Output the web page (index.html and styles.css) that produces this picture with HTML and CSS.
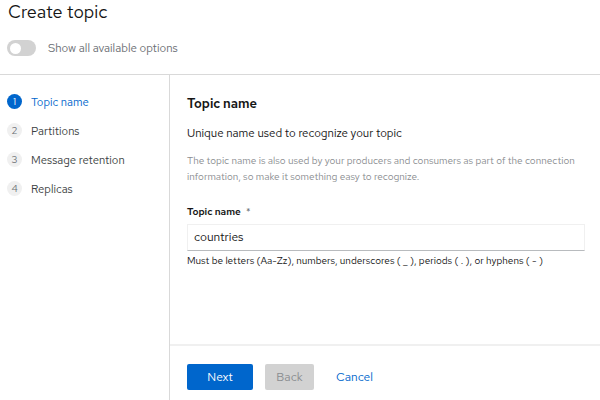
FILE: index.html
```html
<!DOCTYPE html>
<html>
<head>
<meta charset="utf-8">
<link rel="stylesheet" href="styles.css">
</head>
<body>
<div class="page">
  <header class="header">
    <h1 class="title">Create topic</h1>
    <div class="switch-row">
      <span class="switch"><span class="knob"></span></span>
      <span class="switch-label">Show all available options</span>
    </div>
  </header>
  <div class="wizard">
    <nav class="nav">
      <div class="step active"><span class="num">1</span><span class="step-text">Topic name</span></div>
      <div class="step"><span class="num">2</span><span class="step-text">Partitions</span></div>
      <div class="step"><span class="num">3</span><span class="step-text">Message retention</span></div>
      <div class="step"><span class="num">4</span><span class="step-text">Replicas</span></div>
    </nav>
    <div class="panel">
      <div class="body">
        <h2 class="h2">Topic name</h2>
        <p class="lead">Unique name used to recognize your topic</p>
        <p class="desc">The topic name is also used by your producers and consumers as part of the connection information, so make it something easy to recognize.</p>
        <div class="label">Topic name <span class="req">*</span></div>
        <div class="input">countries</div>
        <div class="helper">Must be letters (Aa-Zz), numbers, underscores ( _ ), periods ( . ), or hyphens ( - )</div>
      </div>
      <div class="footer">
        <span class="btn primary">Next</span>
        <span class="btn disabled">Back</span>
        <span class="btn link">Cancel</span>
      </div>
    </div>
  </div>
</div>
</body>
</html>
```
FILE: styles.css
```css
* { box-sizing: border-box; }
html, body { margin: 0; padding: 0; background: #fff; }
body {
  font-family: "Red Hat Text", "Open Sans", "Liberation Sans", sans-serif;
  color: #151515;
  width: 600px;
  height: 400px;
  overflow: hidden;
}
.page { display: flex; flex-direction: column; height: 400px; }
.header {
  height: 75px;
  border-bottom: 1px solid #d9d9d9;
  padding: 0 0 0 8px;
}
.title {
  margin: 0;
  padding-top: 0;
  font-size: 18px;
  line-height: 24px;
  font-weight: 400;
  color: #151515;
}
.switch-row {
  display: flex;
  align-items: center;
  margin-top: 16px;
  margin-left: -1px;
}
.switch {
  width: 29px;
  height: 16px;
  border-radius: 8px;
  background: #d2d2d2;
  display: flex;
  align-items: center;
  padding-left: 3px;
}
.knob {
  width: 11px;
  height: 11px;
  border-radius: 50%;
  background: #fff;
}
.switch-label {
  margin-left: 12px;
  font-size: 11.5px;
  color: #6a6e73;
}
.wizard { flex: 1; display: flex; }
.nav {
  width: 170px;
  border-right: 1px solid #d9d9d9;
  padding-top: 12px;
  padding-left: 7px;
}
.step {
  display: flex;
  align-items: center;
  height: 29px;
  font-size: 11.3px;
  color: #3c3f42;
}
.num {
  width: 15px;
  height: 15px;
  border-radius: 50%;
  background: #f0f0f0;
  color: #6a6e73;
  font-size: 10px;
  display: flex;
  align-items: center;
  justify-content: center;
  margin-right: 9px;
}
.step.active .num { background: #0066cc; color: #fff; }
.step.active .step-text { color: #0066cc; }
.panel { flex: 1; display: flex; flex-direction: column; }
.body { flex: 1; padding: 20px 15px 0 17px; }
.h2 {
  margin: 0;
  font-size: 13px;
  line-height: 18px;
  font-weight: 600;
  color: #151515;
}
.lead {
  margin: 11px 0 0;
  font-size: 11.5px;
  line-height: 18px;
  color: #151515;
}
.desc {
  margin: 11px 0 0;
  font-size: 10px;
  line-height: 16px;
  color: #8a8d90;
}
.label {
  margin-top: 20px;
  font-size: 10px;
  line-height: 14px;
  font-weight: 600;
}
.req { color: #6a6e73; margin-left: 3px; font-weight: 400; }
.input {
  margin-top: 5px;
  height: 27px;
  border: 1px solid #f0f0f0;
  border-bottom: 1px solid #b8bbbe;
  padding: 0 6px;
  font-size: 12px;
  line-height: 25px;
  color: #151515;
}
.helper {
  margin-top: 3px;
  font-size: 10px;
  line-height: 14px;
  color: #151515;
}
.footer {
  height: 56px;
  border-top: 2px solid #f0f0f0;
  display: flex;
  align-items: flex-start;
  padding: 18px 0 0 17px;
  gap: 12px;
}
.btn {
  height: 26px;
  border-radius: 2px;
  font-size: 12px;
  line-height: 26px;
  text-align: center;
}
.primary { width: 66px; background: #0066cc; color: #fff; }
.disabled { width: 49px; background: #d2d2d2; color: #8a8d90; }
.link { color: #0066cc; padding: 0 10px; }
```
